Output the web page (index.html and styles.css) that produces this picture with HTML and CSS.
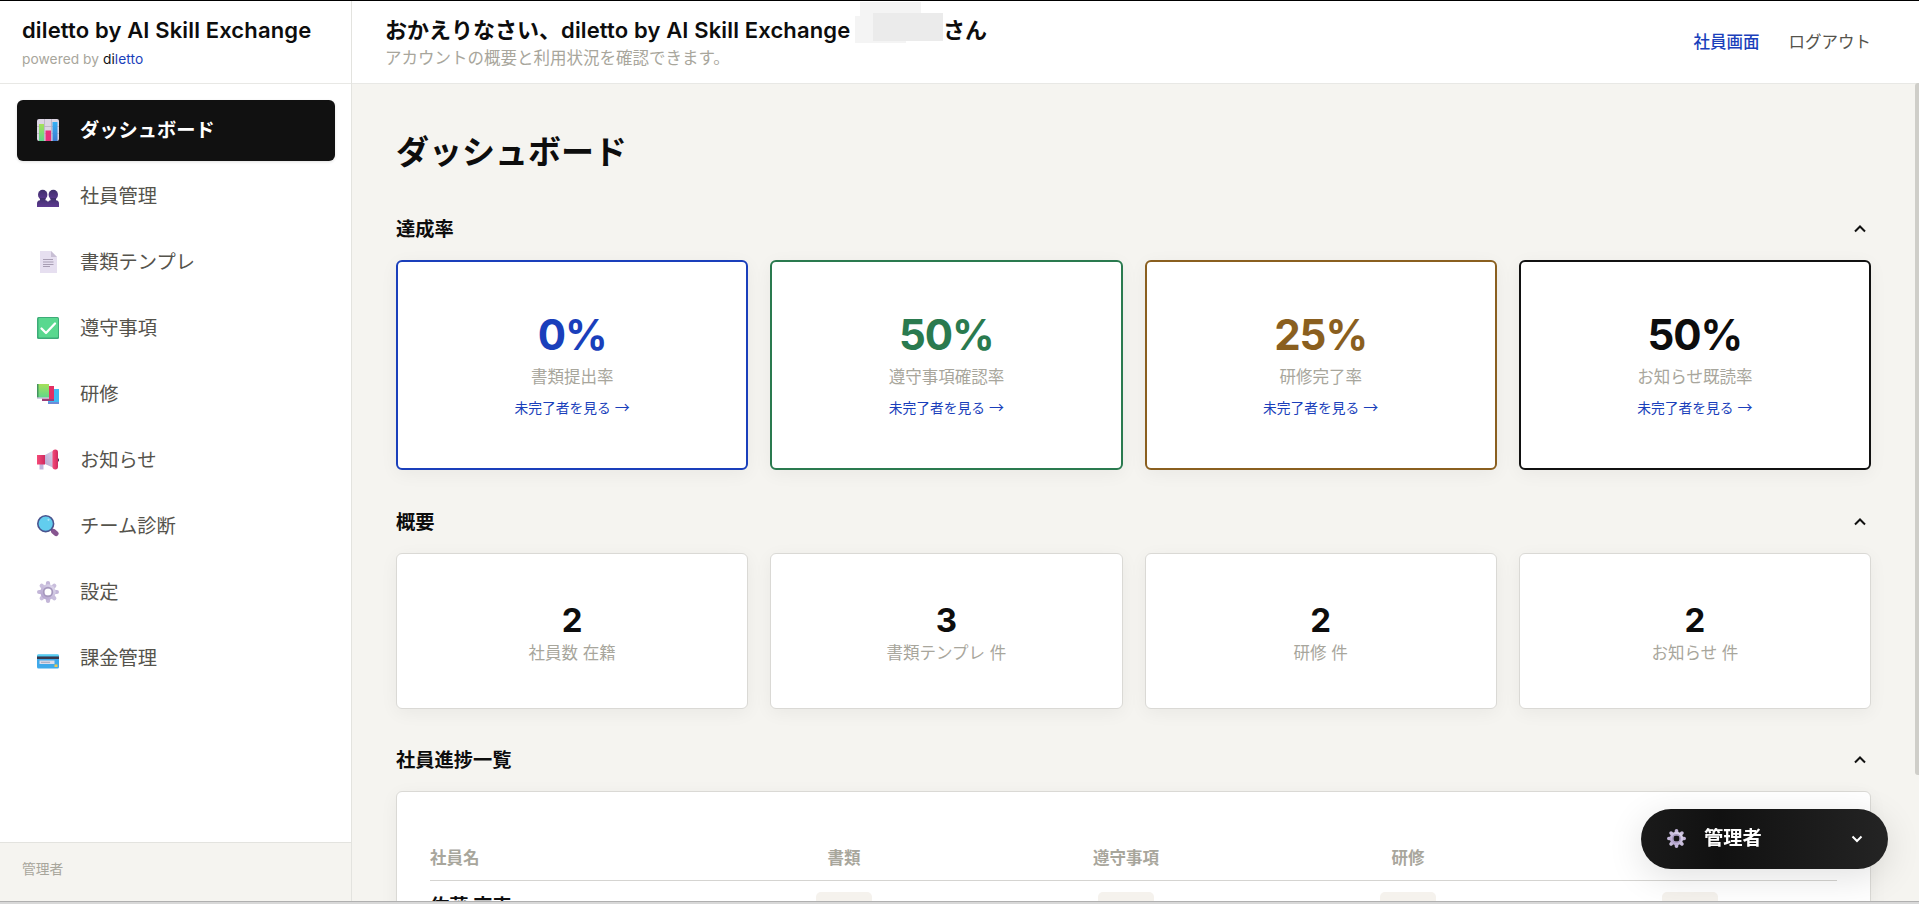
FILE: index.html
```
<!DOCTYPE html>
<html lang="ja">
<head>
  <meta charset="UTF-8" />
  <meta name="viewport" content="width=device-width, initial-scale=1.0" />
  <title>diletto by AI Skill Exchange</title>
  <link rel="stylesheet" href="styles.css">
</head>
<body>
<div class="app">
  <aside class="sidebar">
    <div class="brand">
      <div class="brand-name">diletto by AI Skill Exchange</div>
      <div class="brand-sub">powered by <span class="di">di</span><span class="letto">letto</span></div>
    </div>

    <nav class="nav">
      <a class="nav-item active">
        <svg class="icon" viewBox="0 0 22 22">
          <defs>
            <linearGradient id="bar-green" x1="0" y1="0" x2="0" y2="1"><stop offset="0" stop-color="#a5e05a"/><stop offset="1" stop-color="#5cd68c"/></linearGradient>
            <linearGradient id="bar-blue" x1="0" y1="0" x2="0" y2="1"><stop offset="0" stop-color="#35b0f5"/><stop offset="1" stop-color="#3f7bd0"/></linearGradient>
            <linearGradient id="lilac" x1="1" y1="0" x2="0" y2="1"><stop offset="0" stop-color="#dcd6ea"/><stop offset="1" stop-color="#b5a4cf"/></linearGradient>
            <linearGradient id="people" x1="0" y1="0" x2="0" y2="1"><stop offset="0" stop-color="#3f2f6b"/><stop offset="1" stop-color="#5e3a92"/></linearGradient>
            <linearGradient id="pink" x1="0" y1="0" x2="1" y2="0"><stop offset="0" stop-color="#f54a78"/><stop offset="1" stop-color="#cf2a60"/></linearGradient>
          </defs>
          <rect width="22" height="22" rx="2" fill="#dcd5e3"/>
          <path d="M0 7.5h22M0 14.5h22M7.5 0v22M14.5 0v22" stroke="#b8aec4" stroke-width=".8"/>
          <path d="M2 5h5v17H2z" fill="url(#bar-green)"/>
          <path d="M8.5 11.5h5.500V22H8.500z" fill="#e8307c"/>
          <path d="M15.5 3h5v19h-5z" fill="url(#bar-blue)"/>
        </svg>
        <span>ダッシュボード</span>
      </a>
      <a class="nav-item">
        <svg class="icon" viewBox="0 0 22 22">
          <g fill="url(#people)">
            <ellipse cx="5.700" cy="9.800" rx="4.700" ry="5"/>
            <ellipse cx="16.300" cy="9.800" rx="4.700" ry="5"/>
            <path d="M0 22v-3.500q0-2.800 3-3.200V13h5.500v2.300q2 .2 2.500 1.700.5-1.500 2.500-1.700V13H19v2.300q3 .4 3 3.200V22z"/>
          </g>
        </svg>
        <span>社員管理</span>
      </a>
      <a class="nav-item">
        <svg class="icon" viewBox="0 0 22 22">
          <path d="M3 0h11l6 6v16H3z" fill="#e6dff0"/>
          <path d="M14 0v6h6z" fill="#c8bfd4"/>
          <path d="M6 8.500h10M6 11h10.500M6 13.500h10.500M6 15.500h7" stroke="#a79db3" stroke-width="1"/>
        </svg>
        <span>書類テンプレ</span>
      </a>
      <a class="nav-item">
        <svg class="icon" viewBox="0 0 22 22">
          <rect width="22" height="22" rx="1.500" fill="#3dab78"/>
          <rect x="1.500" y="1" width="19.500" height="19.500" rx="1" fill="#59d88f"/>
          <path d="M4.500 11.500l4.500 4.500 9-9.500" fill="none" stroke="#fff" stroke-width="2.300" stroke-linecap="round" stroke-linejoin="round"/>
        </svg>
        <span>遵守事項</span>
      </a>
      <a class="nav-item">
        <svg class="icon" viewBox="0 0 22 22">
          <path d="M11 6h11v14H11z" fill="#3fb9f2"/>
          <path d="M11 19h11v2H11z" fill="#6d8bd8"/>
          <path d="M5 3h12v13H5z" fill="#e32f63"/>
          <path d="M5 16h12v2H5z" fill="#9c3d78"/>
          <path d="M0 1h12v14H0z" fill="url(#bar-green)"/>
          <path d="M0 1h1.500v14H0z" fill="#43935f"/>
          <path d="M0 14.300h12v1.500H0z" fill="#c8c3dc"/>
        </svg>
        <span>研修</span>
      </a>
      <a class="nav-item">
        <svg class="icon" viewBox="0 0 22 22">
          <path d="M2.500 14h4v6.500h-4z" fill="#c2b3dc"/>
          <path d="M8 6l9-5v18l-9-4z" fill="url(#lilac)"/>
          <path d="M0 6h8v9.500H0z" fill="url(#pink)"/>
          <circle cx="20.500" cy="11" r="1.700" fill="#4a4058"/>
          <rect x="15.500" y=".5" width="5.500" height="20" rx="2.700" fill="url(#pink)"/>
        </svg>
        <span>お知らせ</span>
      </a>
      <a class="nav-item">
        <svg class="icon" viewBox="0 0 22 22">
          <path d="M13.500 13.500l3 3" stroke="#5c3b78" stroke-width="2.500"/>
          <path d="M16.500 16.300l2.600 2.300" stroke="#875590" stroke-width="5" stroke-linecap="round"/>
          <circle cx="8.700" cy="8.700" r="7.900" fill="#62cdee" stroke="#49548f" stroke-width="1.600"/>
          <circle cx="11.500" cy="4.800" r="1.100" fill="#a9e6f8"/>
        </svg>
        <span>チーム診断</span>
      </a>
      <a class="nav-item">
        <svg class="icon" viewBox="0 0 22 22">
          <use href="#gear"/>
        </svg>
        <span>設定</span>
      </a>
      <a class="nav-item">
        <svg class="icon" viewBox="0 0 22 22">
          <rect y="7.500" width="22" height="14" rx="1.500" fill="#3fa9ea"/>
          <path d="M0 9.500v-1q0-1 1-1h20q1 0 1 1v1z" fill="#55d0f2"/>
          <path d="M0 9.500h22v2.500H0z" fill="#39394d"/>
          <path d="M2.500 13.500h15v3.500h-15z" fill="#dcdcea"/>
          <path d="M4 15.300h9" stroke="#a5a5bb"/>
          <path d="M17.500 17.500h3V20h-3z" fill="#f2c84a"/>
        </svg>
        <span>課金管理</span>
      </a>
    </nav>

    <div class="sidebar-foot">管理者</div>
  </aside>

  <div class="main">
    <header class="header">
      <div>
        <h1 class="greeting">おかえりなさい、<span class="latin">diletto by AI Skill Exchange</span> <span class="masked"></span>さん</h1>
        <p class="lead">アカウントの概要と利用状況を確認できます。</p>
      </div>
      <div class="header-links">
        <a class="link-staff">社員画面</a>
        <a class="link-logout">ログアウト</a>
      </div>
    </header>

    <main class="content">
      <h2 class="page-title">ダッシュボード</h2>

      <section class="section">
        <div class="section-head">
          <h3>達成率</h3>
          <svg class="chevron" viewBox="0 0 12 8"><path d="M1 6.500l5-5 5 5"/></svg>
        </div>
        <div class="cards">
          <div class="card rate blue">
            <div class="rate-value">0%</div>
            <div class="card-label">書類提出率</div>
            <a class="card-link">未完了者を見る <span class="arrow">→</span></a>
          </div>
          <div class="card rate green">
            <div class="rate-value">50%</div>
            <div class="card-label">遵守事項確認率</div>
            <a class="card-link">未完了者を見る <span class="arrow">→</span></a>
          </div>
          <div class="card rate brown">
            <div class="rate-value">25%</div>
            <div class="card-label">研修完了率</div>
            <a class="card-link">未完了者を見る <span class="arrow">→</span></a>
          </div>
          <div class="card rate black">
            <div class="rate-value">50%</div>
            <div class="card-label">お知らせ既読率</div>
            <a class="card-link">未完了者を見る <span class="arrow">→</span></a>
          </div>
        </div>
      </section>

      <section class="section">
        <div class="section-head">
          <h3>概要</h3>
          <svg class="chevron" viewBox="0 0 12 8"><path d="M1 6.500l5-5 5 5"/></svg>
        </div>
        <div class="cards">
          <div class="card count">
            <div class="count-value">2</div>
            <div class="card-label">社員数 在籍</div>
          </div>
          <div class="card count">
            <div class="count-value">3</div>
            <div class="card-label">書類テンプレ 件</div>
          </div>
          <div class="card count">
            <div class="count-value">2</div>
            <div class="card-label">研修 件</div>
          </div>
          <div class="card count">
            <div class="count-value">2</div>
            <div class="card-label">お知らせ 件</div>
          </div>
        </div>
      </section>

      <section class="section">
        <div class="section-head">
          <h3>社員進捗一覧</h3>
          <svg class="chevron" viewBox="0 0 12 8"><path d="M1 6.500l5-5 5 5"/></svg>
        </div>
        <div class="card table-card">
          <table class="progress">
            <thead>
              <tr><th>社員名</th><th>書類</th><th>遵守事項</th><th>研修</th><th>お知らせ</th></tr>
            </thead>
            <tbody>
              <tr>
                <td>佐藤 京恵</td>
                <td><span class="badge">0 / 1</span></td>
                <td><span class="badge">0 / 1</span></td>
                <td><span class="badge">0 / 2</span></td>
                <td><span class="badge">0 / 2</span></td>
              </tr>
            </tbody>
          </table>
        </div>
      </section>
    </main>
  </div>
</div>

<div class="scroll-thumb"></div>

<button class="role-switch">
  <svg class="role-icon" viewBox="0 0 22 22">
    <g id="gear">
      <g stroke-width="4.200" stroke-linecap="round">
        <path d="M11 2.100v3M11 16.900v3M2.100 11h3M16.900 11h3" stroke="#c3b6d8"/>
        <path d="M4.700 4.700l2 2M15.300 15.300l2 2M4.700 17.300l2-2M15.300 6.700l2-2" stroke="#c9bedc"/>
      </g>
      <circle cx="11" cy="11" r="5.700" fill="none" stroke="url(#lilac)" stroke-width="4"/>
      <circle cx="11" cy="11" r="4.400" fill="none" stroke="#a698bd" stroke-width="1.600"/>
    </g>
  </svg>
  <span class="role-name">管理者</span>
  <svg class="role-chevron" viewBox="0 0 12 8"><path d="M1.500 1.500L6 6l4.500-4.500"/></svg>
</button>

<div class="window-edge"></div>
</body>
</html>
```
FILE: styles.css
```
* {
  box-sizing: border-box;
}

body {
  margin: 0;
  height: 904px;
  overflow: hidden;
  background: #f5f4f0;
  color: #0d0d0d;
  font-family: Inter, "Noto Sans CJK JP", sans-serif;
  font-size: 16.5px;
  font-optical-sizing: none;
}

h1, h2, h3, p {
  margin: 0;
}

.app {
  display: flex;
  height: 904px;
  overflow: hidden;
  border-top: 1px solid #000;
}

/* sidebar */
.sidebar {
  display: flex;
  flex-direction: column;
  flex: none;
  width: 352px;
  padding-bottom: 3px;
  background: #fff;
  border-right: 1px solid #e3e3df;
}

.brand {
  height: 83px;
  padding: 14px 22px 0;
  border-bottom: 1px solid #e8e8e5;
}

.brand-name {
  font-size: 22px;
  font-weight: 600;
  line-height: 31px;
  letter-spacing: 0.14px;
  white-space: nowrap;
}

.brand-sub {
  margin-top: 3px;
  font-size: 13.75px;
  line-height: 20px;
  letter-spacing: 0.05px;
  color: #a8a69c;
}

.di {
  color: #111;
}

.letto {
  color: #1a3fbb;
}

.nav {
  display: flex;
  flex-direction: column;
  flex: 1;
  gap: 5px;
  padding: 16px 16px 0 17px;
}

.nav-item {
  display: flex;
  align-items: center;
  gap: 21px;
  height: 61px;
  padding: 0 0 2px 20px;
  border-radius: 6px;
  color: #55534c;
  font-size: 19.25px;
  font-weight: 400;
  line-height: 28px;
}

.nav-item.active {
  background: #111;
  color: #fff;
  font-weight: 600;
  box-shadow: 0 1px 3px rgba(0, 0, 0, 0.12);
}

.icon {
  width: 22px;
  height: 22px;
}

.sidebar-foot {
  height: 59px;
  padding: 16px 22px;
  border-top: 1px solid #e3e3df;
  background: #f5f4f0;
  color: #a8a69c;
  font-size: 13.75px;
  line-height: 20px;
}

/* header */
.main {
  display: flex;
  flex-direction: column;
  flex: 1;
  min-width: 0;
}

.header {
  display: flex;
  justify-content: space-between;
  flex: none;
  height: 83px;
  padding: 13px 48px 0 33px;
  background: #fff;
  border-bottom: 1px solid #e8e8e5;
}

.greeting {
  font-size: 22px;
  font-weight: 600;
  line-height: 32px;
}

.latin {
  letter-spacing: 0.14px;
}

/* pixelated user name */
.masked {
  display: inline-block;
  position: relative;
  width: 87px;
  height: 16px;
}

.masked::before {
  content: "";
  position: absolute;
  top: -20px;
  left: -1px;
  width: 93px;
  height: 41px;
  background:
    linear-gradient(#ebebeb, #ebebeb) 18px 11px / 70px 28px no-repeat,
    linear-gradient(#f4f4f4, #f4f4f4) 0 14px / 51px 27px no-repeat,
    linear-gradient(#f4f4f4, #f4f4f4) 5px 0 / 61px 20px no-repeat;
}

.lead {
  color: #a8a69c;
  font-size: 16.5px;
  line-height: 24px;
}

.header-links {
  display: flex;
  gap: 29px;
  padding-top: 16px;
  line-height: 24px;
}

.link-staff {
  color: #1a3fbb;
  font-weight: 500;
}

.link-logout {
  color: #55534c;
}

/* content */
.content {
  padding: 44px 48px 0 44px;
}

.page-title {
  height: 48px;
  margin-bottom: 39px;
  font-size: 33px;
  font-weight: 700;
  line-height: 48px;
}

.section {
  margin-bottom: 37.5px;
}

.section-head {
  display: flex;
  align-items: center;
  justify-content: space-between;
  height: 30px;
  margin-bottom: 15px;
  padding-right: 5px;
}

.section-head h3 {
  padding-bottom: 2px;
  font-size: 19.25px;
  font-weight: 600;
  line-height: 28px;
}

.chevron {
  width: 12px;
  height: 8px;
  margin-bottom: 2px;
  fill: none;
  stroke: #111;
  stroke-width: 2;
}

.cards {
  display: grid;
  grid-template-columns: repeat(4, 1fr);
  gap: 22px;
}

.card {
  display: flex;
  flex-direction: column;
  align-items: center;
  background: #fff;
  border: 1px solid #dad9d5;
  border-radius: 6px;
  box-shadow: 0 4px 18px rgba(0, 0, 0, 0.05);
}

.rate {
  height: 210px;
  padding-top: 47px;
  border-width: 2px;
}

.rate-value {
  font-size: 42px;
  font-weight: 700;
  line-height: 52px;
  letter-spacing: -1px;
}

.blue {
  border-color: #1a3fbb;
}

.green {
  border-color: #2a7a4f;
}

.brown {
  border-color: #8a5f1f;
}

.black {
  border-color: #111;
}

.blue .rate-value {
  color: #1a3fbb;
}

.green .rate-value {
  color: #2a7a4f;
}

.brown .rate-value {
  color: #8a5f1f;
}

.card-label {
  color: #a8a69c;
  font-size: 16.5px;
  line-height: 24px;
}

.rate .card-label {
  margin-top: 4px;
}

.card-link {
  margin-top: 9px;
  color: #1a3fbb;
  font-size: 13.75px;
  line-height: 20px;
}

.arrow {
  font-family: "Noto Sans CJK JP", sans-serif;
  font-size: 15px;
  line-height: 1;
}

.count {
  height: 156px;
  padding-top: 46px;
}

.count-value {
  font-size: 33px;
  font-weight: 700;
  line-height: 40px;
}

.count .card-label {
  margin-top: 1px;
}

.table-card {
  display: block;
  height: 200px;
  padding: 44px 33px 0;
}

.progress {
  width: 100%;
  border-spacing: 0;
  table-layout: fixed;
}

.progress th {
  width: 282px;
  height: 45px;
  padding: 0 0 2px;
  border-bottom: 1px solid #d5d4d1;
  color: #a8a69c;
  font-size: 16.5px;
  font-weight: 600;
}

.progress th:first-child,
.progress td:first-child {
  width: 273px;
  text-align: left;
}

.progress th:last-child,
.progress td:last-child {
  width: 288px;
  padding-right: 6px;
}

.progress td {
  height: 50px;
  padding: 0;
  font-size: 19.25px;
  font-weight: 600;
  line-height: 28px;
  text-align: center;
}

.badge {
  display: block;
  width: 56px;
  height: 28px;
  margin: 0 auto;
  border-radius: 5px;
  background: #f5f2ed;
  color: #a34f22;
  font-size: 15px;
  font-weight: 500;
  line-height: 31px;
}

/* overlays */
.scroll-thumb {
  position: fixed;
  top: 83px;
  right: 0;
  width: 4px;
  height: 692px;
  border-radius: 3px 0 0 3px;
  background: #cfcec9;
}

.role-switch {
  position: fixed;
  top: 809px;
  left: 1641px;
  display: flex;
  align-items: center;
  width: 247px;
  height: 60px;
  padding: 0 25px 1px 26px;
  border: none;
  border-radius: 30px;
  background: linear-gradient(90deg, #1a1a1a 0%, #111 32%, #242424 100%);
  color: #fff;
  font-family: inherit;
  box-shadow: 0 8px 36px rgba(0, 0, 0, 0.12);
}

.role-icon {
  width: 19px;
  height: 19px;
}

.role-name {
  flex: 1;
  margin-left: 18px;
  padding-bottom: 3px;
  font-size: 19.25px;
  font-weight: 700;
  text-align: left;
}

.role-chevron {
  width: 12px;
  height: 8px;
  fill: none;
  stroke: #fff;
  stroke-width: 2;
}

.window-edge {
  position: fixed;
  bottom: 0;
  left: 0;
  width: 100%;
  height: 3px;
  border-top: 1px solid #b0b0b0;
  background: #d8d8d8;
}
```
